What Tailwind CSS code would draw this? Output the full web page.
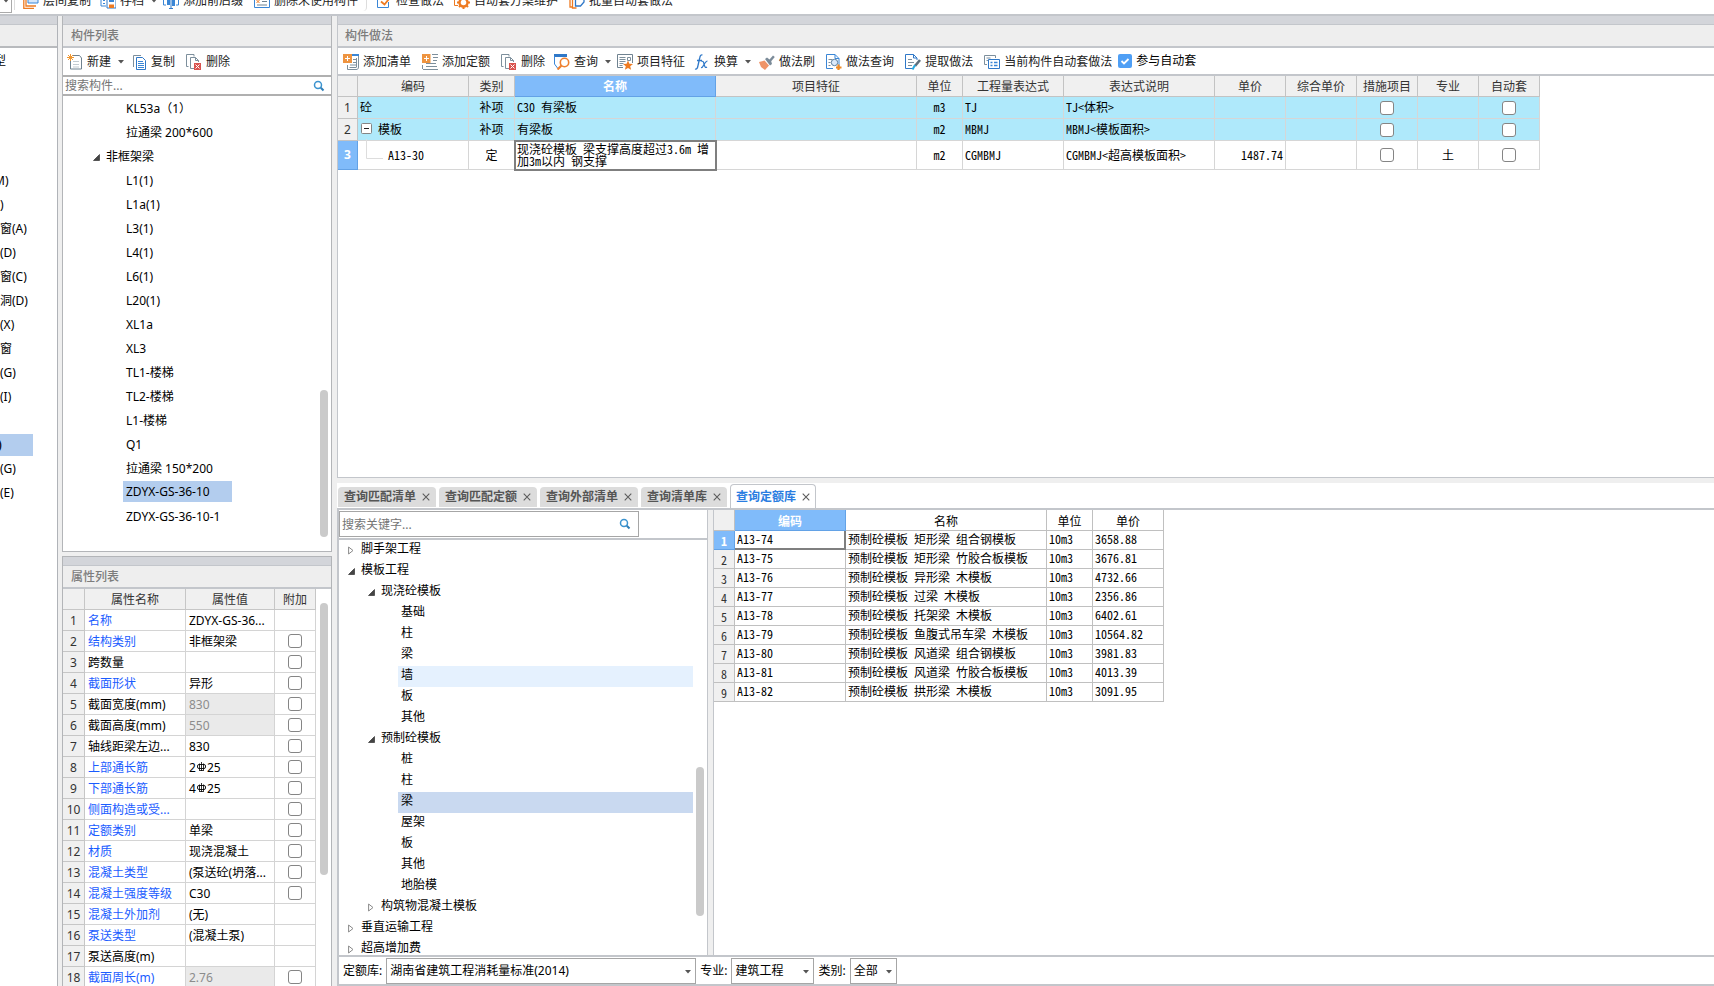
<!DOCTYPE html>
<html lang="zh-CN">
<head>
<meta charset="utf-8">
<title>构件做法</title>
<script src="https://cdn.jsdelivr.net/npm/@tailwindcss/browser@4"></script>
</head>
<body class="bg-[#efefef] font-['Noto_Sans','Noto_Sans_CJK_SC',sans-serif] text-xs text-black">

<svg class="hidden">
  <symbol id="i-new" viewBox="0 0 16 16"><path d="M6 1.5h6.500l2 2.500v11h-11V7" fill="none" stroke="#6f8290"/><path d="M6 7.500h6M6 10.500h6M6 13h6" stroke="#c3cbd1"/><path d="M3.500 0v7M0 3.500h7M1 1l5 5M6 1L1 6" stroke="#f0962e"/></symbol>
  <symbol id="i-copy" viewBox="0 0 16 16"><path d="M2.500 13V1.500H10" fill="none" stroke="#7d8f9c"/><path d="M5.500 3.500h6l3 3v9h-9z" fill="#fff" stroke="#2f78c8"/><path d="M7 7.500h5M7 9.500h6M7 11.500h6M7 13.500h6" stroke="#3a86d6"/></symbol>
  <symbol id="i-del" viewBox="0 0 16 16"><path d="M2.500 12.500h-2V.5H8v2" fill="none" stroke="#7d8f9c"/><path d="M8 14.500H4.500v-11h5l3 3V8" fill="none" stroke="#7d8f9c"/><path d="M9.500 3.500v3h3" fill="none" stroke="#7d8f9c"/><path d="M8 9h7v7H8z" fill="#d9534f"/><path d="M9.500 10.500l4 4M13.500 10.500l-4 4" stroke="#fff"/></symbol>
  <symbol id="i-addlist" viewBox="0 0 16 16"><path d="M9 1h7" stroke="#3a86d6" stroke-width="2"/><path d="M15.500 2v11M13 15.500H4.500V11M13.500 4v9M13.500 13.500H6.500M15.500 13c0 2-1 2.500-2.500 2.500" fill="none" stroke="#7d8f9c"/><path d="M10 5.500h3M10 8.500h3M7 11h6" stroke="#7d8f9c"/><path d="M0 0h9v9H0z" fill="#ee9440"/><path d="M4.500 2v5M2 4.500h5" stroke="#fff"/></symbol>
  <symbol id="i-addquota" viewBox="0 0 16 16"><path d="M10 .5h6M11 3.500h5M11 6.500h4M4 9.500h10M4 12.500h11M1 15.500h15M.5 11v4" stroke="#7d8f9c"/><path d="M0 0h8.500v9H0z" fill="#ee9440"/><path d="M4.500 2v5M2 4.500h5" stroke="#fff"/></symbol>
  <symbol id="i-query" viewBox="0 0 16 16"><path d="M0 1.500h13" stroke="#2f78c8" stroke-width="3"/><path d="M.5 2v8l3 4" fill="none" stroke="#3a86d6"/><circle cx="10.500" cy="8.500" r="4.200" fill="#fff" stroke="#ee8030" stroke-width="1.600"/><path d="M7.500 11.500L3.500 15.500" stroke="#ee8030" stroke-width="2.200"/></symbol>
  <symbol id="i-feature" viewBox="0 0 16 16"><path d="M6 13.500H.5V.5h15V9" fill="none" stroke="#6f8290"/><path d="M2.500 3.500h6M2.500 5.500h6M2.500 7.500h6M2.500 9.500h4M2.500 11.500h3M10.500 3.500h3v3h-3z" fill="none" stroke="#7d8f9c"/><path d="M11 6.500l1.400 3.300 3.600.2-2.800 2.200.9 3.600-3.100-1.900-3.100 1.900.9-3.600L6 10l3.600-.2z" fill="#ee7b22"/></symbol>
  <symbol id="i-fx" viewBox="0 0 16 16"><path d="M1 15c2 .6 2.500-1 3-3.500L5.800 3.500C6.300 1 7.200.6 8.500 1M3 6.500h5" fill="none" stroke="#2f78c8" stroke-width="1.300"/><path d="M7.500 7.500c2-1 2 1 2.800 3.500S11.500 14 13 13M13.500 7c-2 0-3.500 4-5 6-.6.700-1 .6-1.500.5" fill="none" stroke="#2f78c8" stroke-width="1.200"/></symbol>
  <symbol id="i-brush" viewBox="0 0 16 16"><path d="M0 8l5.500-1.500 4.500 5L6 16 2 13z" fill="#ef9468"/><path d="M6 5l2-1.500 2.500 2L14 1.500 15.800 3l-3.600 4.200L13 10l-2 1.500z" fill="#7b8b99"/></symbol>
  <symbol id="i-docq" viewBox="0 0 16 16"><path d="M7 14.500H.5V.5H9l4 4V15" fill="none" stroke="#3a86d6"/><path d="M9 .5v4h4" fill="none" stroke="#3a86d6"/><path d="M2.500 5.500h4M2.500 8.500h2M2.500 11.500h2" stroke="#7d8f9c"/><circle cx="8.500" cy="8.500" r="3.200" fill="#dceafa" stroke="#5b7f9f"/><path d="M12.500 10.500v5.500M10 13.500h5.500" stroke="#f08a24" stroke-width="2.200"/></symbol>
  <symbol id="i-extract" viewBox="0 0 16 16"><path d="M9 14.500H.5V.5h8l3.500 3.500V6" fill="none" stroke="#2f78c8"/><path d="M8.500.5V4H12" fill="none" stroke="#2f78c8"/><path d="M3 5.500h4M3 8.500h6M3 11.500h4" stroke="#7d8f9c"/><path d="M15 6l-5 6" stroke="#5f6f7c" stroke-width="2.600"/><path d="M10 11l-2.500 4.500" stroke="#27a9e0" stroke-width="2"/></symbol>
  <symbol id="i-auto" viewBox="0 0 16 16"><path d="M3 10.500H.5V1.500h11V4M2.500 4h4M2.500 6.500h2" fill="none" stroke="#7d8f9c"/><path d="M4.500 5.500h11v9h-11z" fill="#fff" stroke="#2f78c8"/><path d="M6.500 8.500h2M10 8.500h3.500M6.500 11.500h2M10 11.500h3.500" stroke="#3a86d6" stroke-width="1.500"/></symbol>
  <symbol id="i-layers" viewBox="0 0 16 16"><path d="M5 2h10v8H5z" fill="#d6e7fa" stroke="#3a86d6"/><path d="M3 4v9h10" fill="none" stroke="#ee7b22" stroke-width="1.300"/><path d="M.8 6v9.300H11" fill="none" stroke="#ee7b22" stroke-width="1.300"/></symbol>
  <symbol id="i-save" viewBox="0 0 16 16"><path d="M1 1v12h5M3 10.500h2M3 7.500h2" fill="none" stroke="#3a86d6"/><path d="M7 6h9v9H7z" fill="#fff" stroke="#2f78c8"/><path d="M9 6h5v3H9z" fill="#3a86d6"/><path d="M9 11.500h5V15H9z" fill="#ee7b22"/></symbol>
  <symbol id="i-affix" viewBox="0 0 16 16"><path d="M3 5H.5v7H3M13 5h2.500v7H13" fill="none" stroke="#3a86d6"/><path d="M8 0v16M6 15.500h4" stroke="#2f78c8"/><path d="M4 7h3v5H4zM9 5h3v8H9z" fill="#3a86d6"/></symbol>
  <symbol id="i-unused" viewBox="0 0 16 16"><path d="M.5 0v14.500h15V0" fill="none" stroke="#3a86d6"/><path d="M2.500 7l3 3M5.500 7l-3 3" stroke="#ee7b22"/><path d="M8 8.500h5M3 12h10" stroke="#6f8290"/></symbol>
  <symbol id="i-check" viewBox="0 0 16 16"><path d="M1.500 0v14.500h11V9M12.500 0v2" fill="none" stroke="#3a86d6"/><path d="M3.500 5h4" stroke="#7d8f9c"/><path d="M5 8.500l3.500 3 6-7.500" fill="none" stroke="#ee7b22" stroke-width="1.800"/></symbol>
  <symbol id="i-gear" viewBox="0 0 16 16"><path d="M.5 0v12.500H4" fill="none" stroke="#ee7b22"/><circle cx="9.500" cy="9.500" r="4" fill="#fff" stroke="#ee7b22" stroke-width="2.400"/><path d="M9.500 3v2M9.500 14v2M3 9.500h2M14 9.500h2M5 5l1.500 1.500M14 5l-1.500 1.500M5 14l1.500-1.500M14 14l-1.500-1.500" stroke="#ee7b22" stroke-width="2"/></symbol>
  <symbol id="i-batch" viewBox="0 0 16 16"><path d="M1 3v11h3" fill="none" stroke="#ee7b22" stroke-width="1.300"/><path d="M3.500 2v13h4" fill="none" stroke="#ee7b22" stroke-width="1.300"/><path d="M6.500 0v13h5l3.500-4V0" fill="#fff" stroke="#2f78c8" stroke-width="1.300"/></symbol>
  <symbol id="i-search" viewBox="0 0 12 12"><circle cx="5" cy="5" r="3.500" fill="none" stroke="#3b93cf" stroke-width="1.500"/><path d="M7.800 7.800L10.500 10.500" stroke="#2f7fb8" stroke-width="2"/></symbol>
  <symbol id="i-caret" viewBox="0 0 6 4"><path d="M0 0h6L3 3.500z" fill="#555"/></symbol>
  <symbol id="i-x" viewBox="0 0 9 9"><path d="M.8.8l7.400 7.400M8.200.8L.8 8.200" stroke="#5c5c5c" stroke-width="1.200"/></symbol>
  <symbol id="i-open" viewBox="0 0 7 7"><path d="M6.500 .5v6h-6z" fill="#444" stroke="#222" stroke-width=".6"/></symbol>
  <symbol id="i-closed" viewBox="0 0 6 9"><path d="M.6 1l4.400 3.500L.6 8z" fill="#fff" stroke="#8a8a8a"/></symbol>
  <symbol id="i-rebar" viewBox="0 0 9 10"><path d="M4.500 0v9M2.500 1.500v6.500M6.500 1.500v6.500M2 8.500h5" stroke="#000" fill="none" stroke-width=".8"/><rect x=".5" y="2.500" width="8" height="4" rx="1.500" fill="none" stroke="#000" stroke-width=".9"/></symbol>
</svg>

<div class="flex h-screen flex-col overflow-hidden">

  <header class="flex h-4 shrink-0 items-end overflow-hidden border-b-2 border-[#c3c6cb] bg-white text-[#222]">
    <div class="mb-px flex h-4 w-3 shrink-0 items-center justify-center border-r border-b border-[#aaa]"><svg class="mb-2 h-1 w-1.5"><use href="#i-caret"/></svg></div>
    <div class="mr-2 mb-1 ml-0.5 h-[11px] border-r border-[#ddd]"></div>
    <nav id="topbar" class="mb-[3px] flex items-center"></nav>
  </header>

  <div class="flex min-h-0 flex-1">

    <!-- 构件类型 -->
    <aside class="flex w-[58px] shrink-0 flex-col border-r border-[#b0b3b8] bg-white">
      <div class="h-[9px] shrink-0 border-b border-[#c3c6cb] bg-[#d3d5da]"></div>
      <div class="h-[23px] shrink-0 border-b-2 border-[#b8babd] bg-[#eee]"></div>
      <ul id="types" class="flex flex-col pt-px"></ul>
    </aside>

    <!-- 构件列表 / 属性列表 -->
    <section class="ml-1 flex w-[270px] shrink-0 flex-col">
      <div class="flex h-[536px] shrink-0 flex-col border border-t-0 border-[#b3b5b8] bg-white">
        <div class="h-[9px] shrink-0 border-b border-[#c3c6cb] bg-[#d3d5da]"></div>
        <h2 class="h-[23px] shrink-0 border-b-2 border-[#c3c6cb] bg-[#eee] pl-2 leading-[22px] font-medium text-[#7c7c7c]">构件列表</h2>
        <div id="listbar" class="flex h-[27px] shrink-0 items-center text-[#222]"></div>
        <label class="flex h-[21px] shrink-0 items-center border-t-2 border-b-2 border-[#b0b0b0] pr-1.5 pl-0.5">
          <input type="text" aria-label="搜索构件" placeholder="搜索构件..." class="h-4 min-w-0 flex-1 outline-none placeholder:text-[#757575]">
          <svg class="h-3 w-3"><use href="#i-search"/></svg>
        </label>
        <div class="relative min-h-0 flex-1 pt-px">
          <ul id="parts"></ul>
          <div class="absolute top-[294px] right-[3px] h-[147px] w-2 rounded-full bg-[#cacaca]"></div>
        </div>
      </div>
      <div class="mt-1 flex min-h-0 flex-1 flex-col border-x border-t border-[#b3b5b8] bg-white">
        <div class="h-[9px] shrink-0 border-b border-[#c3c6cb] bg-[#d3d5da]"></div>
        <h2 class="h-[23px] shrink-0 border-b-2 border-[#c3c6cb] bg-[#eee] pl-2 leading-[22px] font-medium text-[#7c7c7c]">属性列表</h2>
        <div class="relative min-h-0 flex-1 overflow-hidden">
          <table class="w-[253px] table-fixed border-separate border-spacing-0 leading-4">
            <colgroup><col class="w-[22px]"><col class="w-[101px]"><col class="w-[89px]"><col class="w-[41px]"></colgroup>
            <thead><tr class="h-[21px] bg-[#f0f0f0] text-[#333]">
              <th class="border-r border-b border-[#c6c6c6]"></th>
              <th class="border-r border-b border-[#c6c6c6] p-0 pt-0.5 font-normal">属性名称</th>
              <th class="border-r border-b border-[#c6c6c6] p-0 pt-0.5 font-normal">属性值</th>
              <th class="border-r border-b border-[#c6c6c6] p-0 pt-0.5 font-normal">附加</th>
            </tr></thead>
            <tbody id="props"></tbody>
          </table>
          <div class="absolute top-[14px] right-[3px] h-[272px] w-2 rounded-full bg-[#cacaca]"></div>
        </div>
      </div>
    </section>

    <!-- 构件做法 -->
    <main class="ml-[5px] flex min-w-0 flex-1 flex-col">
      <div class="flex h-[462px] shrink-0 flex-col border-b border-l border-[#c3c6cb] bg-white">
        <div class="h-[9px] shrink-0 border-b border-[#c3c6cb] bg-[#d3d5da]"></div>
        <h2 class="h-[23px] shrink-0 border-b-2 border-[#c3c6cb] bg-[#eee] pl-[7px] leading-[22px] font-medium text-[#7c7c7c]">构件做法</h2>
        <div id="mainbar" class="flex h-7 shrink-0 items-center gap-px border-b-2 border-[#c3c6cb] pt-px text-[#222]"></div>
        <table class="w-[1202px] table-fixed border-separate border-spacing-0 leading-4">
          <colgroup><col class="w-[20px]"><col class="w-[111px]"><col class="w-[46px]"><col class="w-[201px]"><col class="w-[201px]"><col class="w-[46px]"><col class="w-[101px]"><col class="w-[151px]"><col class="w-[71px]"><col class="w-[71px]"><col class="w-[61px]"><col class="w-[61px]"><col class="w-[61px]"></colgroup>
          <thead><tr id="workhead" class="h-[21px] bg-[#f0f0f0] text-[#333]"></tr></thead>
          <tbody id="work" class="font-['Noto_Sans_Mono_CJK_SC','Liberation_Serif','Noto_Sans_CJK_SC',monospace]"></tbody>
        </table>
      </div>

      <div class="mt-[5px] flex h-[27px] shrink-0 items-end gap-[3px] border-b-2 border-[#c3c6cb] bg-white pl-px" id="tabs"></div>

      <div class="flex min-h-0 flex-1 border-l-2 border-[#c3c6cb]">
        <div class="flex w-[369px] shrink-0 flex-col border-r border-[#c3c6cb] bg-white">
          <div class="shrink-0 border-b-2 border-[#c3c6cb] pt-px pb-px">
            <label class="flex h-[26px] w-[300px] items-center border border-[#a6a6a6] pr-[7px] pl-0.5">
              <input type="text" aria-label="搜索关键字" placeholder="搜索关键字..." class="h-5 min-w-0 flex-1 outline-none placeholder:text-[#757575]">
              <svg class="h-3 w-3"><use href="#i-search"/></svg>
            </label>
          </div>
          <div class="relative min-h-0 flex-1 overflow-hidden">
            <ul id="quota"></ul>
            <div class="absolute top-[227px] right-[3px] h-[149px] w-2 rounded-full bg-[#cacaca]"></div>
          </div>
        </div>
        <div class="ml-[5px] min-w-0 flex-1 border-l border-[#c3c6cb] bg-white">
          <table class="w-[450px] table-fixed border-separate border-spacing-0 font-['Noto_Sans_Mono_CJK_SC','Liberation_Serif','Noto_Sans_CJK_SC',monospace] leading-4">
            <colgroup><col class="w-[21px]"><col class="w-[111px]"><col class="w-[201px]"><col class="w-[46px]"><col class="w-[71px]"></colgroup>
            <thead><tr class="h-[21px]">
              <th class="border-r border-b border-[#c0c0c0] bg-[#f0f0f0]"></th>
              <th class="border-r border-b border-[#63a2e6] bg-[#80bbfa] p-0 pt-0.5 font-bold text-white">编码</th>
              <th class="border-r border-b border-[#c0c0c0] p-0 pt-0.5 font-normal">名称</th>
              <th class="border-r border-b border-[#c0c0c0] p-0 pt-0.5 font-normal">单位</th>
              <th class="border-r border-b border-[#c0c0c0] p-0 pt-0.5 font-normal">单价</th>
            </tr></thead>
            <tbody id="items"></tbody>
          </table>
        </div>
      </div>

      <footer class="flex h-[31px] shrink-0 items-center border-y-2 border-l-2 border-[#c3c6cb] bg-white pl-1">
        <label for="lib" class="mr-1">定额库:</label>
        <div class="relative mr-1">
          <select id="lib" class="h-[26px] w-[310px] appearance-none border border-[#a6a6a6] pl-[3px]"><option>湖南省建筑工程消耗量标准(2014)</option></select>
          <svg class="pointer-events-none absolute top-3 right-[5px] h-1 w-1.5"><use href="#i-caret"/></svg>
        </div>
        <label for="major" class="mr-1">专业:</label>
        <div class="relative mr-1">
          <select id="major" class="h-[26px] w-[83px] appearance-none border border-[#a6a6a6] pl-[3px]"><option>建筑工程</option></select>
          <svg class="pointer-events-none absolute top-3 right-[5px] h-1 w-1.5"><use href="#i-caret"/></svg>
        </div>
        <label for="kind" class="mr-1">类别:</label>
        <div class="relative">
          <select id="kind" class="h-[26px] w-[47px] appearance-none border border-[#a6a6a6] pl-[3px]"><option>全部</option></select>
          <svg class="pointer-events-none absolute top-3 right-[5px] h-1 w-1.5"><use href="#i-caret"/></svg>
        </div>
      </footer>
    </main>
  </div>
</div>

<script>
const $ = id => document.getElementById(id);
const esc = s => s.replace(/</g, '&lt;').replace(/>/g, '&gt;');
const icon = (n, c) => `<svg class="${c} shrink-0"><use href="#i-${n}"/></svg>`;
const caret = icon('caret', 'ml-[3px] h-1 w-1.5');
const box = label => `<input type="checkbox" aria-label="${label}" class="block mx-auto h-3.5 w-3.5 appearance-none rounded-[3px] border border-[#858585] bg-white">`;
const button = ([ic, text, pad, drop]) => `<button type="button" class="flex h-5 items-center gap-1 rounded-sm whitespace-nowrap ${pad}">${icon(ic, 'h-4 w-4')}${text}${drop ? caret : ''}</button>`;

$('topbar').innerHTML = [
  ['layers', '层间复制', 'pr-[9px]'], ['save', '存档', 'pr-1.5', 1], ['affix', '添加前后缀', 'pr-[11px]'],
  ['unused', '删除未使用构件', 'pr-2 mr-[9px] border-r border-[#ddd]'], ['check', '检查做法', 'pr-2.5'],
  ['gear', '自动套方案维护', 'pr-[11px]'], ['batch', '批量自动套做法', '']
].map(button).join('');

$('listbar').innerHTML = [
  ['new', '新建', 'pl-1 pr-[7px]', 1], ['copy', '复制', 'pr-[11px]'], ['del', '删除', '']
].map(button).join('');

$('mainbar').innerHTML = [
  ['addlist', '添加清单', 'px-[5px]'], ['addquota', '添加定额', 'px-[5px]'], ['del', '删除', 'px-[5px]'],
  ['query', '查询', 'pl-[3px] pr-px', 1], ['feature', '项目特征', 'pl-1 pr-[5px]'], ['fx', '换算', 'pl-[3px] pr-0.5', 1],
  ['brush', '做法刷', 'px-[5px]'], ['docq', '做法查询', 'px-[5px]'], ['extract', '提取做法', 'px-[5px]'], ['auto', '当前构件自动套做法', 'px-[5px]']
].map(button).join('') + `
  <label class="mb-0.5 flex items-center gap-1 text-black">
    <span class="relative flex"><input type="checkbox" checked class="h-3.5 w-3.5 appearance-none rounded-[2px] bg-[#4f9ff5]">
    <svg viewBox="0 0 14 14" class="pointer-events-none absolute inset-0 h-3.5 w-3.5"><path d="M3.500 7l2.500 2.500 4.500-4.500" fill="none" stroke="#fff" stroke-width="1.800"/></svg></span>参与自动套
  </label>`;

$('types').innerHTML = ['型', '', '', '', '', 'M)', ')', '窗(A)', '(D)', '窗(C)', '洞(D)', '(X)', '窗', '(G)', '(I)', '', '*', '(G)', '(E)']
  .map(t => t === '*' ? '<li class="my-px mr-6 h-[22px] bg-[#b3cdee] leading-[22px] font-medium"><span class="-ml-0.5">)</span></li>'
                      : `<li class="h-6 leading-6 whitespace-nowrap">${t === 'M)' || t === '型' ? `<span class="-ml-1.5">${t}</span>` : t}</li>`).join('');

$('parts').innerHTML = ['KL53a（1）', '拉通梁 200*600', '>非框架梁', 'L1(1)', 'L1a(1)', 'L3(1)', 'L4(1)', 'L6(1)', 'L20(1)', 'XL1a', 'XL3', 'TL1-楼梯', 'TL2-楼梯', 'L1-楼梯', 'Q1', '拉通梁 150*200', '*ZDYX-GS-36-10', 'ZDYX-GS-36-10-1']
  .map(t => t[0] === '>' ? `<li class="flex h-6 items-center gap-1.5 pl-[30px]">${icon('open', 'h-[7px] w-[7px]')}${t.slice(1)}</li>`
    : t[0] === '*' ? `<li class="flex h-6 items-start pl-[60px]"><span class="w-[109px] bg-[#b3cdee] pt-px pl-[3px] leading-5">${t.slice(1)}</span></li>`
    : `<li class="h-6 pl-[63px] leading-6">${t}</li>`).join('');

const rebar = '<svg class="mx-px mb-1 inline h-2.5 w-[9px]"><use href="#i-rebar"/></svg>';
$('props').innerHTML = [
  ['名称', 'ZDYX-GS-36...', 1, 0], ['结构类别', '非框架梁', 1, 1], ['跨数量', '', 0, 1], ['截面形状', '异形', 1, 1],
  ['截面宽度(mm)', '830', 0, 1, 1], ['截面高度(mm)', '550', 0, 1, 1], ['轴线距梁左边...', '830', 0, 1],
  ['上部通长筋', '2' + rebar + '25', 1, 1], ['下部通长筋', '4' + rebar + '25', 1, 1], ['侧面构造或受...', '', 1, 1],
  ['定额类别', '单梁', 1, 1], ['材质', '现浇混凝土', 1, 1], ['混凝土类型', '(泵送砼(坍落...', 1, 1], ['混凝土强度等级', 'C30', 1, 1],
  ['混凝土外加剂', '(无)', 1, 0], ['泵送类型', '(混凝土泵)', 1, 0], ['泵送高度(m)', '', 0, 0], ['截面周长(m)', '2.76', 1, 1, 1]
].map(([n, v, blue, chk, dis], i) => `<tr class="h-[21px] whitespace-nowrap">
  <td class="border-r border-b border-[#c6c6c6] bg-[#f0f0f0] p-0 pt-0.5 text-center text-[#333]">${i + 1}</td>
  <td class="border-r border-b border-[#d4d4d4] p-0 pt-0.5 pl-[3px] ${blue ? 'text-[#1a5cff]' : ''}">${n}</td>
  <td class="border-r border-b border-[#d4d4d4] p-0 pt-0.5 pl-[3px] ${dis ? 'bg-[#eaeaea] text-[#8c8c8c]' : ''}">${v}</td>
  <td class="border-r border-b border-[#d4d4d4] p-0">${chk ? box(n) : ''}</td></tr>`).join('');

$('workhead').innerHTML = ['', '编码', '类别', '*名称', '项目特征', '单位', '工程量表达式', '表达式说明', '单价', '综合单价', '措施项目', '专业', '自动套']
  .map(t => t[0] === '*' ? `<th class="border-r border-b border-[#63a2e6] bg-[#80bbfa] p-0 pt-0.5 font-bold text-white">${t.slice(1)}</th>`
                         : `<th class="border-r border-b border-[#c3c3c3] p-0 pt-0.5 font-normal">${t}</th>`).join('');

const minus = '<svg viewBox="0 0 11 11" class="h-[11px] w-[11px]"><rect x=".5" y=".5" width="10" height="10" rx="1" fill="#fff" stroke="#858585"/><path d="M3 5.500h5" stroke="#222"/></svg>';
const elbow = '<svg viewBox="0 0 18 20" class="mb-3 h-5 w-[18px]"><path d="M.5 0v19.500H17" fill="none" stroke="#ddd"/></svg>';
$('work').innerHTML = [
  ['砼', '补项', 'C30 有梁板', 'm3', 'TJ', 'TJ<体积>', '', ''],
  [`<div class="flex items-center gap-1.5 pl-px">${minus}模板</div>`, '补项', '有梁板', 'm2', 'MBMJ', 'MBMJ<模板面积>', '', ''],
  [`<div class="flex h-7 items-center gap-1 pl-1.5">${elbow}A13-30</div>`, '定', '现浇砼模板 梁支撑高度超过3.6m 增加3m以内 钢支撑', 'm2', 'CGMBMJ', 'CGMBMJ<超高模板面积>', '1487.74', '土']
].map(([code, kind, name, unit, ex, note, price, major], i) => {
  const td = i < 2 ? 'border-r border-b border-[#d6d6d6] pt-0 pb-0.5' : 'border-r border-b border-[#d6d6d6] py-0';
  return `<tr class="${i < 2 ? 'h-[22px] bg-[#afe9fb]' : 'h-[29px]'}">
  <td class="border-r border-b p-0 text-center font-['Noto_Sans'] ${i < 2 ? 'border-[#c3c3c3] bg-[#f0f0f0] text-[#333]' : 'border-[#63a2e6] bg-[#80bbfa] font-bold text-white'}">${i + 1}</td>
  <td class="${td} px-0.5">${code}</td><td class="${td} px-0 text-center">${kind}</td>
  <td class="${td} pr-0 pl-0.5 ${i < 2 ? '' : 'leading-3 outline-2 -outline-offset-1 outline-[#7f7f7f]'}">${name}</td>
  <td class="${td} px-0"></td><td class="${td} px-0 text-center">${unit}</td>
  <td class="${td} pr-0 pl-0.5">${ex}</td><td class="${td} pr-0 pl-0.5">${esc(note)}</td>
  <td class="${td} pr-0.5 pl-0 text-right">${price}</td><td class="${td} px-0"></td>
  <td class="border-r border-b border-[#d6d6d6] p-0">${box('措施项目')}</td><td class="${td} px-0 text-center">${major}</td><td class="border-r border-b border-[#d6d6d6] p-0">${box('自动套')}</td></tr>`;
}).join('');

$('tabs').innerHTML = ['查询匹配清单', '查询匹配定额', '查询外部清单', '查询清单库']
  .map(t => `<button type="button" class="mb-px flex h-5 items-center gap-1.5 rounded-t-sm bg-[#dcdcdc] px-1.5 font-bold text-[#555]">${t}${icon('x', 'h-2 w-2')}</button>`).join('') +
  `<button type="button" class="flex h-6 items-center gap-1.5 rounded-t-sm border border-b-0 border-[#c3c6cb] bg-white px-[5px] font-bold text-[#2a7de1]">查询定额库${icon('x', 'h-2 w-2')}</button>`;

const indent = ['pl-[9px]', 'pl-[29px]', 'pl-[59px]'];
$('quota').innerHTML = ['0+脚手架工程', '0-模板工程', '1-现浇砼模板', '2 基础', '2 柱', '2 梁', '2h墙', '2 板', '2 其他', '1-预制砼模板', '2 桩', '2 柱', '2s梁', '2 屋架', '2 板', '2 其他', '2 地胎模', '1+构筑物混凝土模板', '0+垂直运输工程', '0+超高增加费']
  .map(s => {
    const lv = +s[0], k = s[1], t = s.slice(2);
    if (lv === 2) return `<li class="flex h-[21px] ${indent[2]}"><span class="mr-3.5 flex-1 pl-[3px] leading-[17px] ${k === 'h' ? 'bg-[#e5f1fe]' : k === 's' ? 'bg-[#c9d9f0]' : ''}">${t}</span></li>`;
    return `<li class="flex h-[21px] items-center gap-1.5 leading-[17px] ${indent[lv]}">${k === '+' ? icon('closed', 'h-[9px] w-1.5 mr-px') : icon('open', 'h-[7px] w-[7px]')}<span class="mb-1">${t}</span></li>`;
  }).join('');

$('items').innerHTML = [
  ['矩形梁 组合钢模板', '3658.88'], ['矩形梁 竹胶合板模板', '3676.81'], ['异形梁 木模板', '4732.66'], ['过梁 木模板', '2356.86'],
  ['托架梁 木模板', '6402.61'], ['鱼腹式吊车梁 木模板', '10564.82'], ['风道梁 组合钢模板', '3981.83'], ['风道梁 竹胶合板模板', '4013.39'], ['拱形梁 木模板', '3091.95']
].map(([n, p], i) => {
  const td = 'border-r border-b border-[#c0c0c0] pt-0 pb-0.5 pr-0 pl-0.5';
  return `<tr class="h-[19px] whitespace-nowrap">
  <td class="border-r border-b p-0 pt-0.5 text-center ${i ? 'border-[#c0c0c0] bg-[#f0f0f0] text-[#333]' : 'border-[#63a2e6] bg-[#80bbfa] font-bold text-white'}">${i + 1}</td>
  <td class="${i ? td : 'border-r-2 border-b-2 border-[#7f7f7f] pt-0 pb-px pr-0 pl-0.5'}">A13-${74 + i}</td><td class="${td}">预制砼模板 ${n}</td><td class="${td}">10m3</td><td class="${td}">${p}</td></tr>`;
}).join('');
</script>
</body>
</html>
